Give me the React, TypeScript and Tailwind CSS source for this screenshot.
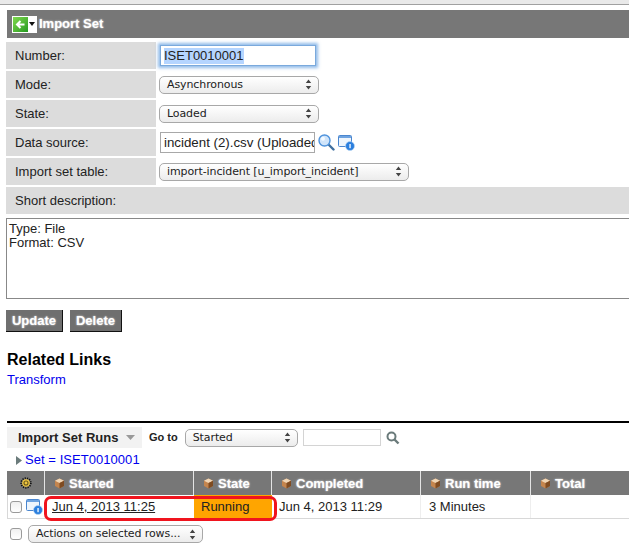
import React from 'react';

const Arrows = () => (
  <svg width="7" height="11" viewBox="0 0 7 11" className="shrink-0">
    <path d="M3.5 0.5L6.2 4H0.8z M3.5 10.5L0.8 7H6.2z" fill="#444" />
  </svg>
);

const Select = ({ label, className }: { label: string; className: string }) => (
  <div
    className={`flex items-center justify-between h-[18px] pl-[7px] pr-[6px] rounded-[5px] border border-[#a8a8a8] bg-gradient-to-b from-white to-[#ececec] text-[11px] tracking-[-0.1px] text-[#222] font-['DejaVu_Sans',sans-serif] whitespace-nowrap ${className}`}
  >
    <span className="pt-[1px]">{label}</span>
    <Arrows />
  </div>
);

const Row = ({ label, children }: { label: string; children?: React.ReactNode }) => (
  <div className="flex h-[27px] mb-[2px]">
    <div className="w-[150px] shrink-0 bg-[#dcdcdc] pl-[9px] flex items-center text-[13px] text-[#222]">{label}</div>
    <div className="flex items-center pl-[3px] flex-1">{children}</div>
  </div>
);

const Cube = () => (
  <svg width="11" height="11" viewBox="0 0 11 11" className="shrink-0">
    <path d="M5.5 0.5L10 2.8V8L5.5 10.5L1 8V2.8z" fill="#c4854e" />
    <path d="M5.5 0.5L10 2.8L5.5 5L1 2.8z" fill="#f0d6b6" />
    <path d="M5.5 5L10 2.8V8L5.5 10.5z" fill="#7f4c22" />
  </svg>
);

const RefIcon = () => (
  <svg width="17" height="17" viewBox="0 0 17 17" className="shrink-0">
    <rect x="0.5" y="1.5" width="13" height="11" rx="1" fill="#eef5fc" stroke="#4a86cf" />
    <rect x="1" y="2" width="12" height="2" fill="#6ea3e0" />
    <circle cx="12" cy="12" r="4.5" fill="#2b7fde" stroke="#bcd8f5" strokeWidth="0.6" />
    <rect x="11.4" y="10" width="1.3" height="4.2" fill="#fff" />
  </svg>
);

const Magnifier = () => (
  <svg width="17" height="17" viewBox="0 0 17 17" className="shrink-0">
    <path d="M10 10L15.5 15.5" stroke="#3f6f9f" strokeWidth="2.4" strokeLinecap="round" />
    <circle cx="6.5" cy="6.5" r="5.5" fill="#cfe4fa" stroke="#4f93dc" strokeWidth="1.4" />
    <circle cx="5" cy="4.8" r="2" fill="#f4faff" />
  </svg>
);

const Gear = () => (
  <svg width="12" height="12" viewBox="0 0 12 12">
    <circle cx="6" cy="6" r="4.8" fill="none" stroke="#111" strokeWidth="1.8" strokeDasharray="1.2 1.1" />
    <circle cx="6" cy="6" r="3.8" fill="#f0c63e" />
    <circle cx="6" cy="6" r="2" fill="none" stroke="#6b5a20" strokeWidth="1.1" />
  </svg>
);

const Checkbox = () => (
  <div className="w-[12px] h-[12px] rounded-[3px] border border-[#9a9a9a] bg-gradient-to-b from-[#f0f0f0] to-white shrink-0" />
);

const headShadow = '[text-shadow:0_0_2px_rgba(255,255,255,0.85)]';

const HeadCell = ({ label, className }: { label: string; className: string }) => (
  <div className={`flex items-center gap-[4px] pl-[9px] pt-[1px] bg-[#777] border-r border-[#e4e4e4] ${className}`}>
    <Cube />
    <span className={`text-[13px] font-bold text-white ${headShadow}`}>{label}</span>
  </div>
);

export default function App() {
  return (
    <div className="w-[629px] h-[555px] overflow-hidden bg-white font-['Liberation_Sans',sans-serif]">
      <div className="h-[5px] bg-[#e9e9e9] border-b border-[#a0a0a0]" />

      <div className="ml-[7px] mt-[5px] h-[28px] bg-[#777] flex items-center pl-[5px]">
        <div className="flex items-center bg-white h-[17px] w-[25px]">
          <div className="w-[15px] h-[15px] ml-[1px] bg-gradient-to-br from-[#7fd94f] to-[#1f9a1f] flex items-center justify-center">
            <svg width="11" height="11" viewBox="0 0 11 11">
              <path d="M9.5 5.5H2.5M5.5 2L2 5.5L5.5 9" fill="none" stroke="#fff" strokeWidth="2" />
            </svg>
          </div>
          <svg width="6" height="4" viewBox="0 0 6 4" className="ml-[1px]">
            <path d="M0 0H6L3 4z" fill="#111" />
          </svg>
        </div>
        <span className={`ml-[2px] text-[13px] font-bold text-white ${headShadow}`}>Import Set</span>
      </div>

      <div className="ml-[6px] mt-[4px]">
        <Row label="Number:">
          <div className="w-[156px] h-[21px] ml-[1px] border border-[#7aa9dc] shadow-[0_0_3px_2px_rgba(110,165,225,0.75)] bg-white flex items-center pl-[3px] text-[13px] text-[#222]">
            <span className="bg-[#b5d5ff] leading-[16px]">ISET0010001</span>
          </div>
        </Row>
        <Row label="Mode:">
          <Select label="Asynchronous" className="w-[160px]" />
        </Row>
        <Row label="State:">
          <Select label="Loaded" className="w-[160px]" />
        </Row>
        <Row label="Data source:">
          <input
            readOnly
            value="incident (2).csv (Uploaded by admin)"
            className="w-[155px] h-[21px] ml-[1px] border border-[#a8a8a8] bg-white pl-[3px] text-[13.3px] text-[#222] outline-none"
          />
          <span className="ml-[3px]"><Magnifier /></span>
          <span className="ml-[3px]"><RefIcon /></span>
        </Row>
        <Row label="Import set table:">
          <Select label="import-incident [u_import_incident]" className="w-[250px]" />
        </Row>
        <div className="h-[27px] bg-[#dcdcdc] pl-[9px] flex items-center text-[13px] text-[#222]">Short description:</div>
        <div className="mt-[4px] h-[81px] border border-[#888] border-r-0 bg-white pl-[2px] pt-[3px] text-[13px] leading-[14px] text-[#222]">
          <div>Type: File</div>
          <div>Format: CSV</div>
        </div>

        <div className="flex gap-[7px] mt-[11px]">
          <div className={`w-[57px] h-[22px] bg-[#6f6f6f] border-r border-b border-[#111] flex items-center justify-center text-[13px] font-bold text-white ${headShadow}`}>Update</div>
          <div className={`w-[52px] h-[22px] bg-[#6f6f6f] border-r border-b border-[#111] flex items-center justify-center text-[13px] font-bold text-white ${headShadow}`}>Delete</div>
        </div>

        <div className="ml-[1px] mt-[19px] text-[16px] leading-[18px] font-bold text-black">Related Links</div>
        <div className="ml-[1px] mt-[3px] text-[13px] leading-[16px] text-[#0000ee]">Transform</div>
      </div>

      <div className="ml-[7px] mt-[33px] h-[2px] bg-black" />

      <div className="ml-[7px] mt-[4px] flex items-center h-[21px]">
        <div className="w-[135px] h-[21px] bg-[#f2f2f2] flex items-center pl-[11px] gap-[8px]">
          <span className="text-[13px] font-bold text-[#222]">Import Set Runs</span>
          <svg width="9" height="5" viewBox="0 0 9 5"><path d="M0 0H9L4.5 5z" fill="#999" /></svg>
        </div>
        <span className="ml-[7px] text-[11px] font-bold text-[#222]">Go to</span>
        <Select label="Started" className="ml-[7px] w-[113px]" />
        <div className="ml-[5px] w-[78px] h-[17px] border border-[#d4d4d4] bg-white" />
        <svg width="14" height="14" viewBox="0 0 14 14" className="ml-[5px]">
          <circle cx="5.5" cy="5.5" r="4" fill="none" stroke="#6a7a7a" strokeWidth="2" />
          <path d="M8.5 8.5L12.5 12.5" stroke="#6a7a7a" strokeWidth="2.4" />
        </svg>
      </div>

      <div className="ml-[16px] mt-[2px] h-[20px] flex items-center gap-[3px] text-[13px] tracking-[0.05px] text-[#0000ee]">
        <svg width="6" height="9" viewBox="0 0 6 9"><path d="M0 0L6 4.5L0 9z" fill="#6b7b7b" /></svg>
        <span>Set = ISET0010001</span>
      </div>

      <div className="relative ml-[7px] mt-[1px]">
        <div className="flex h-[24px]">
          <div className="w-[38px] bg-[#777] border-r border-[#e4e4e4] flex items-center justify-center"><Gear /></div>
          <HeadCell label="Started" className="w-[149px]" />
          <HeadCell label="State" className="w-[78px]" />
          <HeadCell label="Completed" className="w-[149px]" />
          <HeadCell label="Run time" className="w-[110px]" />
          <HeadCell label="Total" className="flex-1 border-r-0" />
        </div>
        <div className="flex h-[24px] border-b border-l border-[#d8d8d8] text-[13px] text-[#222]">
          <div className="w-[37px] flex items-center pl-[2px] gap-[4px] shrink-0"><Checkbox /><RefIcon /></div>
          <div className="w-[149px] flex items-center pl-[7px] underline">Jun 4, 2013 11:25</div>
          <div className="w-[78px] flex items-center pl-[7px] bg-[#ffa500]">Running</div>
          <div className="w-[149px] flex items-center pl-[7px] border-r border-[#eeeeee]">Jun 4, 2013 11:29</div>
          <div className="w-[110px] flex items-center pl-[8px] border-r border-[#eeeeee]">3 Minutes</div>
        </div>
        <div className="absolute left-[37px] top-[25px] w-[233px] h-[25px] rounded-[7px] border-[3px] border-[#f0141e]" />
      </div>

      <div className="ml-[10px] mt-[6px] flex items-center">
        <Checkbox />
        <Select label="Actions on selected rows..." className="ml-[6px] w-[175px]" />
      </div>
    </div>
  );
}
